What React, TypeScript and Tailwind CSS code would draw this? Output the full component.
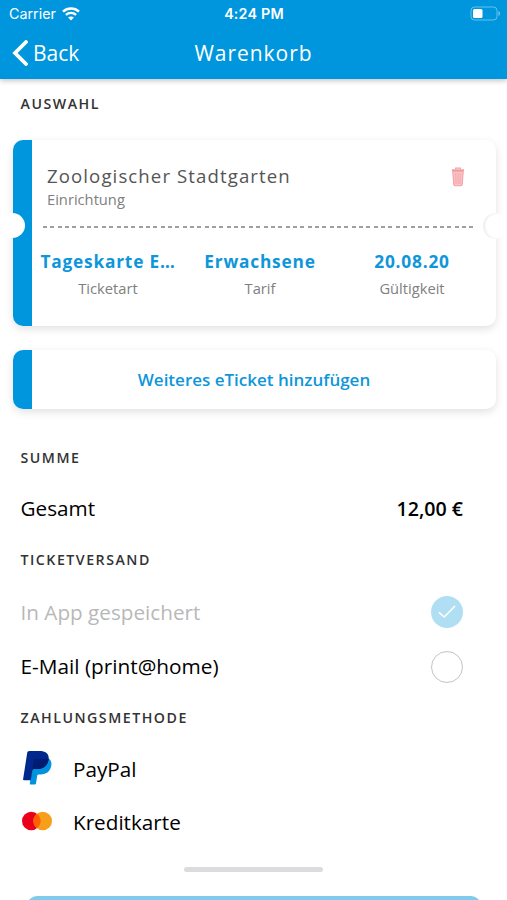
import { ReactNode } from 'react'

interface TicketInfoProps {
  value: string
  label: string
}

function WifiIcon() {
  return (
    <svg width="18" height="14" viewBox="0 0 18 14" fill="none" stroke="white">
      <path d="M1 4.6C5.4 0.4 12.6 0.4 17 4.6" strokeWidth="2.4" />
      <path d="M3.9 7.8C6.8 5.1 11.2 5.1 14.1 7.8" strokeWidth="2.3" />
      <path d="M9 13.6L6.1 10.6C7.6 9.1 10.4 9.1 11.9 10.6Z" fill="white" stroke="none" />
    </svg>
  )
}

function BatteryIcon() {
  return (
    <svg width="31" height="15" viewBox="0 0 31 15" fill="none">
      <rect x="1" y="1" width="26" height="13" rx="3.5" stroke="white" strokeOpacity="0.4" />
      <rect x="3" y="3" width="9.5" height="9" rx="1.5" fill="white" />
      <path d="M28.5 5V10C30.4 9.3 30.4 5.7 28.5 5Z" fill="white" fillOpacity="0.5" />
    </svg>
  )
}

function TrashIcon() {
  return (
    <svg width="14" height="20" viewBox="0 0 14 20" fill="none">
      <path d="M1.8 4.2H12.2L11.2 17.4Q11.1 18.7 9.8 18.7H4.2Q2.9 18.7 2.8 17.4Z" fill="#fac3c5" stroke="#f3a1a5" strokeWidth="1.1" />
      <path d="M0.9 3.2H13.1" stroke="#f1989c" strokeWidth="1.7" />
      <path d="M4.6 2.4V1.1H9.4V2.4" stroke="#f3a1a5" strokeWidth="1.1" />
      <path d="M4.7 6L5 17M7 6V17M9.3 6L9 17" stroke="#f3a1a5" strokeWidth="0.8" />
    </svg>
  )
}

function PaypalIcon() {
  return (
    <svg width="29" height="34" viewBox="0 0 29 34">
      <path
        d="M25.6 7.6C27.9 9.2 28.8 11.6 28.3 14.6C27.4 20.4 23.5 23.5 17.7 23.5H15.6C14.8 23.5 14.3 24 14.2 24.7L13 32.6C12.9 33.2 12.5 33.5 12 33.5H7.6C7 33.5 6.7 33.1 6.8 32.5L10.4 9Z"
        fill="#0092dc"
      />
      <path
        d="M6.3 0H16.5C22.8 0 26.4 3.2 25.6 8.4C24.6 14.9 20.3 18 14.5 18H11.2C10.2 18 9.5 18.7 9.3 19.6L7.8 29.3H0.9C0.3 29.3 0 28.9 0.1 28.3L4.2 1.8C4.4 0.7 5.2 0 6.3 0Z"
        fill="#00288c"
      />
      <path
        d="M25.6 7.6L25.5 8.8C24.4 15.1 20.2 18 14.5 18H11.2C10.2 18 9.5 18.7 9.3 19.6L8.8 22.6L10.8 9.6C11 8.5 11.8 7.8 12.9 7.8H20.7C22.6 7.8 24.3 7.1 25.6 7.6Z"
        fill="#001c70"
      />
    </svg>
  )
}

function MastercardIcon() {
  return (
    <svg width="30" height="20" viewBox="0 0 30 20">
      <circle cx="9.3" cy="10" r="9.3" fill="#eb001b" />
      <circle cx="20.7" cy="10" r="9.3" fill="#f79e1b" />
      <path d="M15 2.65A9.3 9.3 0 0 1 15 17.35A9.3 9.3 0 0 1 15 2.65Z" fill="#ff5f00" />
    </svg>
  )
}

function SectionTitle({ children }: { children: ReactNode }) {
  return (
    <h2 className="flex h-[50px] items-center px-[20.5px] text-[14.2px] font-semibold tracking-[1.5px] text-[#333]">
      {children}
    </h2>
  )
}

function TicketInfo({ value, label }: TicketInfoProps) {
  return (
    <div className="flex flex-1 flex-col items-center">
      <span className="text-[17.3px] leading-6 font-bold tracking-[0.8px] whitespace-nowrap text-[#0e96da]">
        {value}
      </span>
      <span className="mt-0.5 text-[14.7px] leading-6 text-[#808080]">{label}</span>
    </div>
  )
}

export default function App() {
  return (
    <div className="flex h-[900px] w-[507px] flex-col overflow-hidden bg-white font-['Open_Sans',sans-serif] text-black">
      <header className="relative h-[79px] shrink-0 bg-[#0096dd] text-white shadow-[0_2px_5px_rgba(0,0,0,0.22)]">
        <div className="grid h-7 grid-cols-3 items-center pr-[6px] pl-[9px] font-['Inter',sans-serif] text-[14.3px]">
          <div className="flex items-center gap-[6px]">
            <span>Carrier</span>
            <WifiIcon />
          </div>
          <span className="pr-[2px] text-center font-semibold tracking-[0.2px]">4:24 PM</span>
          <div className="flex justify-end pb-px">
            <BatteryIcon />
          </div>
        </div>
        <div className="grid h-[50px] grid-cols-3 items-center px-3">
          <button className="flex items-center gap-[5px] text-left text-[21px]">
            <svg width="16" height="26" viewBox="0 0 16 26" fill="none">
              <path d="M14 2L3 13L14 24" stroke="white" strokeWidth="3.8" strokeLinecap="round" />
            </svg>
            <span className="pt-px">Back</span>
          </button>
          <h1 className="pt-0.5 text-center text-[21px] font-medium tracking-[0.95px]">Warenkorb</h1>
        </div>
      </header>

      <main>
        <SectionTitle>AUSWAHL</SectionTitle>

        <div className="relative mt-[11px] mr-[11px] ml-[13px] flex h-[186px] rounded-[10px] shadow-[0_3px_9px_rgba(0,0,0,0.12)]">
          <div className="w-[19px] rounded-l-[10px] bg-[#0096dd]" />
          <div className="flex-1">
            <div className="flex h-[86px] items-start justify-between pt-6 pr-[31px] pl-[15px]">
              <div>
                <h3 className="text-[18.6px] leading-6 font-medium tracking-[1.1px] text-[#555]">
                  Zoologischer Stadtgarten
                </h3>
                <p className="-mt-px text-[14.7px] leading-6 text-[#808080]">Einrichtung</p>
              </div>
              <button className="pt-[3px]">
                <TrashIcon />
              </button>
            </div>
            <div className="mr-[19px] ml-[11px] h-[1.5px] bg-[repeating-linear-gradient(90deg,#a0a0a0_0_4px,transparent_4px_7.35px)]" />
            <div className="flex pt-[22px] pr-2">
              <TicketInfo value="Tageskarte E…" label="Ticketart" />
              <TicketInfo value="Erwachsene" label="Tarif" />
              <TicketInfo value="20.08.20" label="Gültigkeit" />
            </div>
          </div>
          <div className="absolute top-[73px] -left-[13px] size-[25px] rounded-full bg-white" />
          <div className="absolute top-[73px] -right-[13px] size-[26px] rounded-full bg-white shadow-[inset_2px_0_2px_rgba(0,0,0,0.07)]" />
        </div>

        <button className="mt-6 ml-[13px] flex h-[59px] w-[483px] rounded-[10px] shadow-[0_3px_9px_rgba(0,0,0,0.12)]">
          <span className="h-full w-[19px] rounded-l-[10px] bg-[#0096dd]" />
          <span className="flex h-full flex-1 items-center justify-center pr-5 text-[17px] font-semibold text-[#0e96da]">
            Weiteres eTicket hinzufügen
          </span>
        </button>

        <div className="mt-6">
          <SectionTitle>SUMME</SectionTitle>
          <div className="flex h-[52px] items-center justify-between pr-11 pl-[20.5px]">
            <span className="text-[20.7px]">Gesamt</span>
            <span className="text-[19.6px] font-semibold">12,00 €</span>
          </div>
        </div>

        <SectionTitle>TICKETVERSAND</SectionTitle>
        <div className="flex h-[55px] items-center justify-between pr-11 pl-[20.5px]">
          <span className="text-[20.7px] text-[#b8b8b8]">In App gespeichert</span>
          <span className="mb-px flex size-8 items-center justify-center rounded-full bg-[#b0dff4]">
            <svg width="18" height="14" viewBox="0 0 18 14" fill="none">
              <path d="M1 7.4L6.2 12L17 1" stroke="white" strokeWidth="1.6" />
            </svg>
          </span>
        </div>
        <div className="flex h-[53px] items-center justify-between pr-11 pl-[20.5px]">
          <span className="pt-px text-[20.8px]">E-Mail (print@home)</span>
          <span className="size-8 rounded-full border-[1.5px] border-[#c4c4c4]" />
        </div>

        <SectionTitle>ZAHLUNGSMETHODE</SectionTitle>
        <div className="flex h-[53px] items-center pl-[23px]">
          <span className="w-[50px] pb-1">
            <PaypalIcon />
          </span>
          <span className="text-[20.7px]">PayPal</span>
        </div>
        <div className="flex h-[54px] items-center pl-[22px]">
          <span className="w-[51px] pb-1">
            <MastercardIcon />
          </span>
          <span className="text-[20.7px]">Kreditkarte</span>
        </div>
      </main>

      <div className="mx-auto mt-[17px] h-[5px] w-[139px] shrink-0 rounded-full bg-[#dcdcde]" />
      <button className="mt-6 mr-[26px] ml-[27px] h-12 shrink-0 rounded-[10px] bg-[#80caec]" />
    </div>
  )
}
